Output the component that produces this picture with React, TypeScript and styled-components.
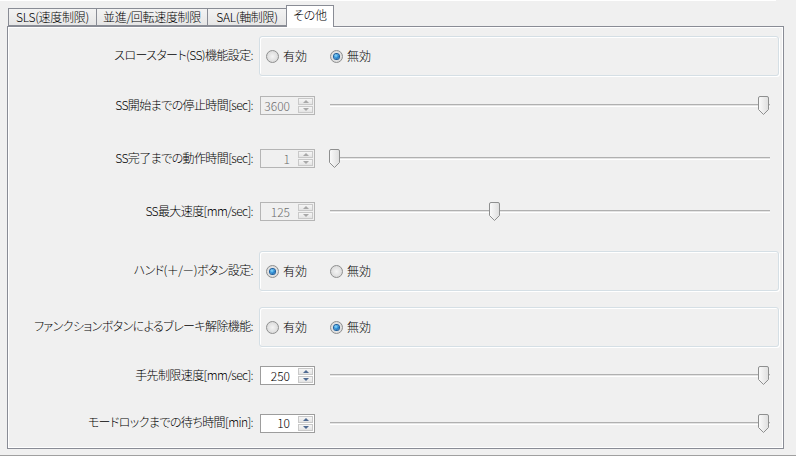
import { createGlobalStyle } from "styled-components"
import styled from "styled-components"

const GlobalStyle = createGlobalStyle`
    html, body {
        margin: 0;
        padding: 0;
        background: #f0f0f0;
    }
    body {
        font-family: "Noto Sans CJK JP", "Noto Sans", sans-serif;
        font-size: 12px;
        font-weight: 300;
        font-feature-settings: "palt";
        color: #000;
    }
`

const Frame = styled.div`
    width: 796px;
    height: 457px;
    box-sizing: border-box;
    overflow: hidden;
    display: flex;
    flex-direction: column;
`

const TabBar = styled.div`
    height: 27px;
    display: flex;
    align-items: flex-end;
    padding-left: 8px;
    border-top: 1px solid #fff;
    width: 776px;
    box-sizing: border-box;
`

const Tab = styled.div<{ w: number, active?: boolean }>`
    position: relative;
    box-sizing: border-box;
    width: ${p => p.w}px;
    height: ${p => p.active ? 22 : 18}px;
    margin-left: -1px;
    margin-bottom: ${p => p.active ? -1 : 0}px;
    z-index: ${p => p.active ? 2 : 1};
    display: flex;
    align-items: center;
    justify-content: center;
    padding-bottom: ${p => p.active ? 3 : 0}px;
    border: 1px solid #898c95;
    border-bottom: ${p => p.active ? 'none' : '1px solid #898c95'};
    background: ${p => p.active ? '#fff' : 'linear-gradient(#f3f3f3, #e6e6e6)'};
    line-height: 1;
    letter-spacing: -0.3px;
    white-space: nowrap;
    &:first-child {
        margin-left: 0;
    }
`

const Panel = styled.div`
    width: 777px;
    margin-left: 7px;
    box-sizing: border-box;
    border: 1px solid #898c95;
    box-shadow: inset 0 0 0 1px #fff;
    padding: 9px 0 4px 0;
    display: flex;
    flex-direction: column;
`

const BottomRule = styled.div`
    margin-top: 6px;
    height: 1px;
    border-top: 1px solid #a0a0a0;
    background: #fff;
`

const Row = styled.div<{ h: number, mt?: number }>`
    height: ${p => p.h}px;
    margin-top: ${p => p.mt || 0}px;
    display: grid;
    grid-template-columns: 245px 1fr;
    column-gap: 6px;
    align-items: center;
`

const Label = styled.div`
    text-align: right;
    white-space: nowrap;
    line-height: 1;
    letter-spacing: -0.6px;
    padding-bottom: 2px;
`

const GroupBox = styled.div`
    height: 100%;
    box-sizing: border-box;
    margin-right: 4px;
    border: 1px solid #d5dfe5;
    border-radius: 3px;
    box-shadow: inset 1px 1px 0 #fff, 1px 1px 0 #fff;
    display: flex;
    align-items: center;
    padding-left: 6px;
`

const RadioItem = styled.label`
    width: 64px;
    display: flex;
    align-items: center;
    gap: 4px;
    line-height: 1;
`

const RadioDot = styled.span<{ checked?: boolean }>`
    width: 13px;
    height: 13px;
    box-sizing: border-box;
    border-radius: 50%;
    border: 1px solid #8e8f8f;
    background: radial-gradient(circle at 50% 50%, #f4f4f4 0, #dcdcdc 70%, #e6e6e6 100%);
    display: flex;
    align-items: center;
    justify-content: center;
    &::after {
        content: "";
        display: ${p => p.checked ? 'block' : 'none'};
        width: 5px;
        height: 5px;
        border-radius: 50%;
        background: radial-gradient(circle at 40% 35%, #8fe0ff 0, #2a8ad4 50%, #0b4f91 100%);
        box-shadow: 0 0 0 1px #1c5e9c;
    }
`

const Controls = styled.div`
    display: flex;
    align-items: center;
    padding-left: 1px;
`

const SpinBox = styled.div<{ disabled?: boolean }>`
    width: 55px;
    height: 19px;
    box-sizing: border-box;
    border: 1px solid ${p => p.disabled ? '#b5b5b5' : '#9d9d9d'};
    background: ${p => p.disabled ? '#f0f0f0' : '#fff'};
    color: ${p => p.disabled ? '#6d6d6d' : '#000'};
    display: flex;
    align-items: center;
    padding: 0 1px;
`

const SpinValue = styled.div`
    flex: 1;
    text-align: right;
    padding-right: 8px;
    line-height: 1;
`

const SpinButtons = styled.div`
    width: 15px;
    height: 15px;
    display: flex;
    flex-direction: column;
    gap: 1px;
`

const SpinHalf = styled.div<{ down?: boolean, disabled?: boolean }>`
    flex: 1;
    box-sizing: border-box;
    border: 1px solid #c9c9c9;
    background: linear-gradient(#f6f6f6, #e4e4e4);
    display: flex;
    align-items: center;
    justify-content: center;
    &::after {
        content: "";
        border-left: 3px solid transparent;
        border-right: 3px solid transparent;
        ${p => p.down ? 'border-top' : 'border-bottom'}: 3px solid ${p => p.disabled ? '#a8a8a8' : '#4f6a91'};
    }
`

const SliderTrack = styled.div`
    position: relative;
    margin-left: 15px;
    width: 440px;
    height: 19px;
    &::before {
        content: "";
        position: absolute;
        left: 0;
        right: 0;
        top: 8px;
        height: 1px;
        border-top: 1px solid #b0b0b0;
        border-bottom: 1px solid #fff;
        background: #e4e4e4;
    }
`

const Thumb = styled.svg`
    position: absolute;
    top: 0;
    width: 11px;
    height: 19px;
`

type RadioRow = { kind: 'radio', label: string, checked: number, h: number, mt?: number }
type SliderRow = { kind: 'slider', label: string, value: number, min: number, max: number, disabled?: boolean, h: number, mt?: number }

const rows: (RadioRow | SliderRow)[] = [
    { kind: 'radio', label: 'スロースタート(SS)機能設定:', checked: 1, h: 40 },
    { kind: 'slider', label: 'SS開始までの停止時間[sec]:', value: 3600, min: 0, max: 3600, disabled: true, h: 53, mt: 3 },
    { kind: 'slider', label: 'SS完了までの動作時間[sec]:', value: 1, min: 1, max: 600, disabled: true, h: 53 },
    { kind: 'slider', label: 'SS最大速度[mm/sec]:', value: 125, min: 0, max: 335, disabled: true, h: 53 },
    { kind: 'radio', label: 'ハンド(＋/－)ボタン設定:', checked: 0, h: 40, mt: 13 },
    { kind: 'radio', label: 'ファンクションボタンによるブレーキ解除機能:', checked: 1, h: 40, mt: 16 },
    { kind: 'slider', label: '手先制限速度[mm/sec]:', value: 250, min: 0, max: 250, h: 53, mt: 2 },
    { kind: 'slider', label: 'モードロックまでの待ち時間[min]:', value: 10, min: 0, max: 10, h: 42 },
]

const SliderThumb = ({ pct }: { pct: number }) => (
    <Thumb viewBox="0 0 11 19" style={{ left: Math.round(pct * (440 - 11)) - 1 }}>
        <defs>
            <linearGradient id="tg" x1="0" y1="0" x2="1" y2="0">
                <stop offset="0" stopColor="#fbfbfb" />
                <stop offset="1" stopColor="#dedede" />
            </linearGradient>
        </defs>
        <path d="M2 0.5 H9 Q10.5 0.5 10.5 2 V13.5 L5.5 18.5 L0.5 13.5 V2 Q0.5 0.5 2 0.5 Z"
            fill="url(#tg)" stroke="#8e8f8f" strokeWidth="1" />
    </Thumb>
)

const App = () => {
    return (
        <Frame>
            <GlobalStyle />
            <TabBar>
                <Tab w={89}>SLS(速度制限)</Tab>
                <Tab w={112}>並進/回転速度制限</Tab>
                <Tab w={80}>SAL(軸制限)</Tab>
                <Tab w={48} active>その他</Tab>
            </TabBar>
            <Panel>
                {rows.map(row => (
                    <Row key={row.label} h={row.h} mt={row.mt}>
                        <Label>{row.label}</Label>
                        {row.kind === 'radio' ? (
                            <GroupBox>
                                <RadioItem><RadioDot checked={row.checked === 0} />有効</RadioItem>
                                <RadioItem><RadioDot checked={row.checked === 1} />無効</RadioItem>
                            </GroupBox>
                        ) : (
                            <Controls>
                                <SpinBox disabled={row.disabled}>
                                    <SpinValue>{row.value}</SpinValue>
                                    <SpinButtons>
                                        <SpinHalf disabled={row.disabled} />
                                        <SpinHalf down disabled={row.disabled} />
                                    </SpinButtons>
                                </SpinBox>
                                <SliderTrack>
                                    <SliderThumb pct={(row.value - row.min) / (row.max - row.min)} />
                                </SliderTrack>
                            </Controls>
                        )}
                    </Row>
                ))}
            </Panel>
            <BottomRule />
        </Frame>
    )
}

export default App
